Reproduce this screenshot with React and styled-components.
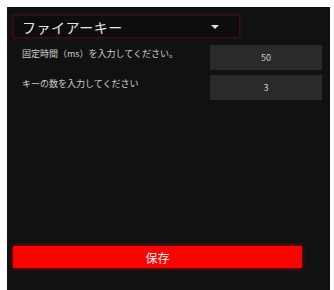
import React from 'react'
import styled, { createGlobalStyle } from 'styled-components'

const GlobalStyle = createGlobalStyle`
  html, body {
    margin: 0;
    padding: 0;
    background: #ffffff;
    font-family: "Noto Sans CJK JP", "Noto Sans", sans-serif;
  }
`

const Page = styled.div`
  width: 334px;
  height: 290px;
  padding: 7px 4px 0 7px;
  box-sizing: border-box;
`

const Panel = styled.div`
  height: 100%;
  background: #111111;
  box-sizing: border-box;
  padding: 8px 8px 0 6px;
  display: flex;
  flex-direction: column;
`

const Select = styled.div`
  width: 227px;
  height: 23px;
  box-sizing: border-box;
  border: 1px solid #3a0d12;
  box-shadow: 0 0 3px rgba(120, 20, 30, 0.5);
  background: #0d0d0d;
  display: flex;
  align-items: center;
  justify-content: space-between;
  padding: 0 20px 0 8px;
  color: #e8e8e8;
  font-size: 14px;
  letter-spacing: 0.5px;
`

const Caret = styled.span`
  width: 0;
  height: 0;
  border-left: 4px solid transparent;
  border-right: 4px solid transparent;
  border-top: 4px solid #e0e0e0;
`

const Rows = styled.div`
  display: flex;
  flex-direction: column;
  gap: 5px;
  margin-top: 7px;
`

const Row = styled.div`
  display: flex;
  align-items: center;
  justify-content: space-between;
`

const Label = styled.span`
  color: #d0d0d0;
  font-size: 9px;
  padding-left: 9px;
  margin-top: -8px;
`

const Input = styled.div`
  width: 112px;
  height: 25px;
  background: #2a2a2a;
  color: #cfcfcf;
  font-size: 9px;
  display: flex;
  align-items: center;
  justify-content: center;
`

const SaveButton = styled.button`
  margin-top: auto;
  margin-bottom: 22px;
  width: 289px;
  height: 22px;
  border: none;
  background: #ff0000;
  box-shadow: 0 0 4px rgba(255, 0, 0, 0.7);
  color: #f4f4f4;
  font-family: inherit;
  font-size: 12px;
  padding: 0;
  cursor: pointer;
`

export default function App() {
  return (
    <Page>
      <GlobalStyle />
      <Panel>
        <Select>
          <span>ファイアーキー</span>
          <Caret />
        </Select>
        <Rows>
          <Row>
            <Label>固定時間（ms）を入力してください。</Label>
            <Input>50</Input>
          </Row>
          <Row>
            <Label>キーの数を入力してください</Label>
            <Input>3</Input>
          </Row>
        </Rows>
        <SaveButton>保存</SaveButton>
      </Panel>
    </Page>
  )
}
